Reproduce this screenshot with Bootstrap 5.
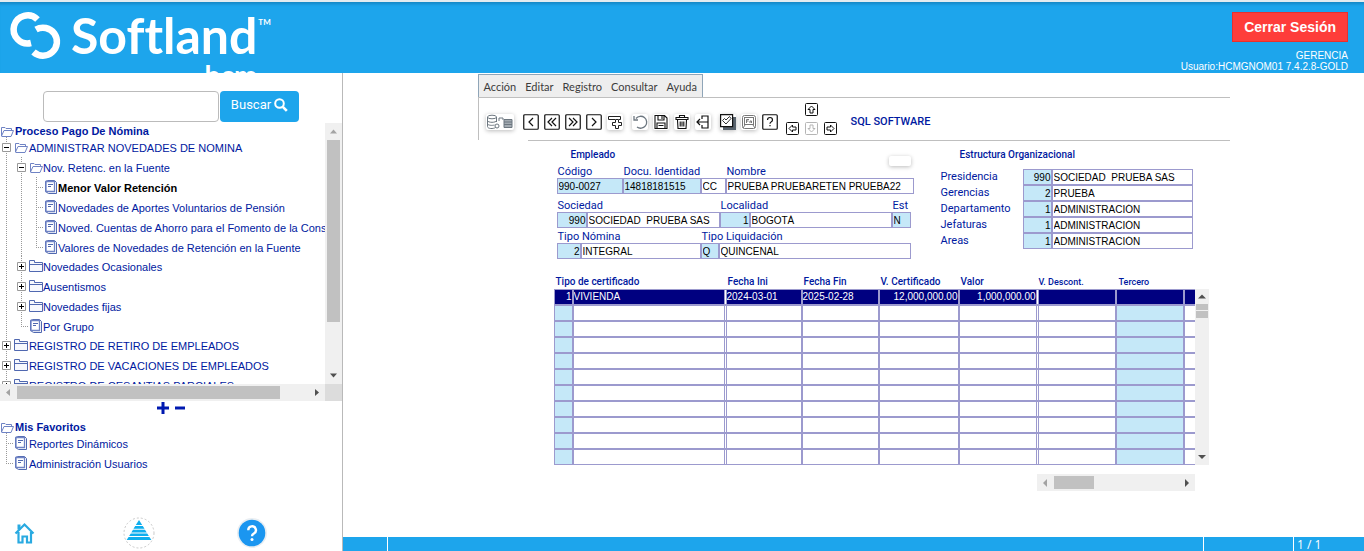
<!DOCTYPE html>
<html lang="es">
<head>
<meta charset="utf-8">
<meta name="viewport" content="width=device-width, initial-scale=1">
<title>Softland HCM</title>
<link href="https://cdn.jsdelivr.net/npm/bootstrap@5.3.0/dist/css/bootstrap.min.css" rel="stylesheet">
<style>
:root{--blue:#1da5ec;--ink:#0019a0;--line:#9c9ace;--key:#c5e8f8}
body{font:11px/16px "Liberation Sans",Arial,sans-serif;color:var(--ink);background:#fff}
a{color:inherit;text-decoration:none}
svg{display:block;flex:none}
/* header */
.topbar{height:73px;background:var(--blue);border-top:2px solid #e4ecf0;box-shadow:inset 0 4px 3px -2px #1687c4;color:#fff;padding-right:16px}
.brand{padding:4px 0 0 8px}
.brand-word{font:700 50px/58px Lato,sans-serif;font-variant-ligatures:none;padding-left:9px}
.brand-sub{font:700 28px/28px Lato,sans-serif;text-align:right;margin-top:-3px}
.brand-tm{font:700 8px/12px Lato,sans-serif;padding:10px 0 0 1px}
.logout{background:#fe3d3a;color:#fff;border:1px solid #e8302e;border-radius:0;font-size:14px;font-weight:700;line-height:16px;padding:6px 11px;margin-top:10px}
.logout:hover{background:#e8302e;color:#fff}
.session{font-size:10px;line-height:11px;margin-top:8px}
/* sidebar */
.side{width:343px;border-right:1px solid #b9b9b9;padding-top:18px}
.search{padding:0 43px}
.search .form-control{height:31px;border:1px solid #bbb;border-radius:4px;font-size:12px;padding:4px 8px}
.search .btn{width:79px;height:31px;margin-left:1px;gap:3px;background:var(--blue);color:#fff;font:13px/16px Roboto,sans-serif;border-radius:4px;border:0;padding:0 0 4px}
.treebox{height:261px;margin-top:1px}
.tree{list-style:none;margin:0;padding:0;white-space:nowrap}
.tree ul{list-style:none;margin:0;padding:0}
.tree ul ul{padding-left:15px;margin-bottom:-1px}
.tree ul li{background:repeating-linear-gradient(#999 0 1px,transparent 1px 2px) 6px 0/1px 100% no-repeat}
.tree ul li:last-child{background-size:1px 11px}
.root{height:14px;line-height:12px;padding-top:2px;font-weight:700}
.root svg{margin-right:1px}
.node{height:20px}
.node span{padding-top:2px}
.node::before{content:"";flex:none;width:8px;height:1px;margin-left:6px;background:repeating-linear-gradient(90deg,#999 0 1px,transparent 1px 2px)}
.node.exp::before{display:none}
.tog{width:14px;height:9px;border:0;padding:0 0 0 2px;background:none}
.current{color:#000;font-weight:700}
.sb{background:#f0f0f0}
.thumb{background:#c1c1c1}
.plusminus{height:14px;gap:6px}
.plusminus button{border:0;padding:0;background:none}
.fav{margin-top:4px}
.dock{padding:0 74px 2px 9px;height:34px}
/* application */
.app{width:752px;padding-top:1px}
.frame-top{border-bottom:1px solid #bfbfbf}
.menus{background:#eee;border:1px solid #8fa5b8;border-bottom:0;height:23px;padding:0 5px;gap:9px;font:11px/23px Lato,sans-serif;color:#3c3c3c}
.tools{height:42px;border-left:1px solid #bfbfbf;padding-left:7px}
.low{margin-top:5px}
.frame-low{border-top:1px solid #bfbfbf;margin-left:50px}
.tb{border:0;padding:0;background:#fff;width:16px;height:16px;border-radius:2px}
.soft{box-shadow:0 1px 4px #bbb}
.tgroup{gap:5px;margin-left:9px}
.pad{grid-template-columns:repeat(3,13px);gap:6px;margin-left:8px}
.pad .tb{width:13px;height:13px}
.pad .up{grid-column:2}
.pad .lf{grid-column:1}
.appname{font:500 11px/14px Roboto,sans-serif;margin-left:14px}
.ttl{font:500 10px/14px Roboto,sans-serif}
/* forms */
.forms{padding:0 37px 0 79px}
.emp{width:357px}
.lbl{font:11px/12px Roboto,sans-serif;white-space:nowrap;padding-left:1px}
.fld{height:16px;border:1px solid var(--line);border-radius:0;padding:0 1px;font:10px/14px "Liberation Sans",Arial,sans-serif;color:#000;background:#fff;min-width:0;width:100%;display:block}
.fld:focus{outline:1px solid var(--ink)}
.key{background:var(--key)}
.num{text-align:right;padding:0}
.g1{grid-template-columns:66px 78px 25px 1fr}
.g2{grid-template-columns:30px 133px 30px 142px 19px;padding-right:3px}
.g3{grid-template-columns:24px 120px 18px 1fr;padding-right:3px}
.org{grid-template-columns:83px 29px 141px;width:253px}
.org .lbl{line-height:16px}
/* records */
.recs{padding-left:76px;margin-top:16px}
.grid{width:641px;table-layout:fixed;border-collapse:separate;border-spacing:0;color:#000}
.grid th{font:500 10px/14px Roboto,sans-serif;color:var(--ink);padding:0 0 0 2px;white-space:nowrap}
.grid th.mini{font-size:9px;padding-left:3px}
.grid td{height:16px;border:1px solid var(--line);padding:0;line-height:14px;font-size:10px;background-clip:padding-box;white-space:nowrap;overflow:hidden}
.grid td:nth-child(1),.grid td:nth-child(8){background-color:var(--key)}
.grid td:nth-child(2),.grid td:nth-child(6){border-right:0}
.grid td:nth-child(3),.grid td:nth-child(7){border-left:3px double var(--line)}
.grid td:last-child{border-right:0}
.grid tr.on td{background-color:#000080;color:#fff}
.vbar{width:14px;height:176px;padding:4px 0}
.hbar{width:158px;height:17px;margin:9px 0 0 483px;padding:0 4px}
/* status */
.status{height:14px;background:var(--blue);color:#fff;font:12px/15px "Open Sans",sans-serif}
.status div+div{border-left:1px solid #fff}
</style>
</head>
<body>
<svg width="0" height="0" class="position-absolute" aria-hidden="true">
<defs>
<symbol id="open" viewBox="0 0 14 11"><path d="M1.5 10V1.5H5l1 1h5.500V4M1.500 10 4 4.500h9.500L11 10.500H1.500" fill="#fff" stroke="#6f83c4"/></symbol>
<symbol id="shut" viewBox="0 0 14 12"><path d="M.5 11.500V.5h5v2h8v9zM.5 4.500h13" fill="#f6f8fd" stroke="#5068b0"/></symbol>
<symbol id="doc" viewBox="0 0 14 15"><path d="M3.500.5h7l2 2v11h-8l-3-2v-10z" fill="#fff" stroke="#5068b0"/><path d="M2 1.500h8.500v10H2z" fill="#fff" stroke="#6f83c4" stroke-width="1.300"/><path d="M4 4.500h5M4 6.500h3" stroke="#5068b0"/></symbol>
<symbol id="more" viewBox="0 0 9 9"><path d="M.5.5h8v8h-8z" fill="#fff" stroke="#999"/><path d="M2 4.500h5M4.500 2v5" stroke="#000"/></symbol>
<symbol id="less" viewBox="0 0 9 9"><path d="M.5.5h8v8h-8z" fill="#fff" stroke="#999"/><path d="M2 4.500h5" stroke="#000"/></symbol>
<symbol id="arrow" viewBox="0 0 13 13"><rect x=".5" y=".5" width="12" height="12" rx="1" fill="#fff" stroke="currentColor"/><path d="M6.500 3 10 6.500H8V10H5V6.500H3z" fill="none" stroke="currentColor"/></symbol>
<symbol id="box" viewBox="0 0 16 16"><rect x=".75" y=".75" width="14.500" height="14.500" rx="1" fill="#fff" stroke="#111" stroke-width="1.200"/></symbol>
</defs>
</svg>
<div class="min-vh-100 d-flex flex-column">
<header class="topbar d-flex justify-content-between overflow-hidden">
  <div class="brand d-flex align-items-start">
    <svg width="54" height="58" viewBox="8 6 54 58" aria-hidden="true" fill="none" stroke="#fff" stroke-width="6.500"><path d="M37.500 19.500A14 14 0 1 0 31 43"/><path d="M36 29.500A14 14 0 1 1 33.500 52"/></svg>
    <div><div class="brand-word">Softland</div><div class="brand-sub">hcm</div></div>
    <div class="brand-tm">TM</div>
  </div>
  <div class="d-flex flex-column align-items-end">
    <button type="button" class="btn logout">Cerrar Sesión</button>
    <div class="session text-end">GERENCIA<br>Usuario:HCMGNOM01 7.4.2.8-GOLD</div>
  </div>
</header>
<div class="flex-grow-1 d-flex">
<aside class="side d-flex flex-column flex-shrink-0">
  <form class="search d-flex" role="search">
    <input class="form-control" type="text" aria-label="Buscar">
    <button type="button" class="btn d-flex align-items-center justify-content-center flex-shrink-0">Buscar
      <svg width="14" height="14" viewBox="0 0 14 14" aria-hidden="true" fill="none" stroke="#fff"><circle cx="5.500" cy="5.500" r="4.300" stroke-width="2"/><path d="m8.800 8.800 4 4" stroke-width="2.600"/></svg></button>
  </form>
  <div class="treebox d-flex">
    <nav class="flex-grow-1 overflow-hidden" aria-label="Procesos">
      <ul class="tree"><li>
        <a href="#" class="root d-flex align-items-center"><svg width="14" height="11"><use href="#open"/></svg>Proceso Pago De Nómina</a>
        <ul>
          <li><div class="node exp d-flex align-items-center"><button type="button" class="tog" aria-label="Contraer"><svg width="9" height="9"><use href="#less"/></svg></button><svg width="14" height="11"><use href="#open"/></svg><span><a href="#">&#8202;ADMINISTRAR NOVEDADES DE NOMINA</a></span></div>
            <ul>
              <li><div class="node exp d-flex align-items-center"><button type="button" class="tog" aria-label="Contraer"><svg width="9" height="9"><use href="#less"/></svg></button><svg width="14" height="11"><use href="#open"/></svg><span><a href="#">Nov. Retenc. en la Fuente</a></span></div>
                <ul>
                  <li><a href="#" class="node current d-flex align-items-center"><svg width="14" height="15"><use href="#doc"/></svg><span>Menor Valor Retención</span></a></li>
                  <li><a href="#" class="node d-flex align-items-center"><svg width="14" height="15"><use href="#doc"/></svg><span>Novedades de Aportes Voluntarios de Pensión</span></a></li>
                  <li><a href="#" class="node d-flex align-items-center"><svg width="14" height="15"><use href="#doc"/></svg><span>Noved. Cuentas de Ahorro para el Fomento de la Const</span></a></li>
                  <li><a href="#" class="node d-flex align-items-center"><svg width="14" height="15"><use href="#doc"/></svg><span>Valores de Novedades de Retención en la Fuente</span></a></li>
                </ul></li>
              <li><div class="node exp d-flex align-items-center"><button type="button" class="tog" aria-label="Expandir"><svg width="9" height="9"><use href="#more"/></svg></button><svg width="14" height="12"><use href="#shut"/></svg><span><a href="#">Novedades Ocasionales</a></span></div></li>
              <li><div class="node exp d-flex align-items-center"><button type="button" class="tog" aria-label="Expandir"><svg width="9" height="9"><use href="#more"/></svg></button><svg width="14" height="12"><use href="#shut"/></svg><span><a href="#">Ausentismos</a></span></div></li>
              <li><div class="node exp d-flex align-items-center"><button type="button" class="tog" aria-label="Expandir"><svg width="9" height="9"><use href="#more"/></svg></button><svg width="14" height="12"><use href="#shut"/></svg><span><a href="#">Novedades fijas</a></span></div></li>
              <li><a href="#" class="node d-flex align-items-center"><svg width="14" height="15"><use href="#doc"/></svg><span>Por Grupo</span></a></li>
            </ul></li>
          <li><div class="node exp d-flex align-items-center"><button type="button" class="tog" aria-label="Expandir"><svg width="9" height="9"><use href="#more"/></svg></button><svg width="14" height="12"><use href="#shut"/></svg><span><a href="#">&#8202;REGISTRO DE RETIRO DE EMPLEADOS</a></span></div></li>
          <li><div class="node exp d-flex align-items-center"><button type="button" class="tog" aria-label="Expandir"><svg width="9" height="9"><use href="#more"/></svg></button><svg width="14" height="12"><use href="#shut"/></svg><span><a href="#">&#8202;REGISTRO DE VACACIONES DE EMPLEADOS</a></span></div></li>
          <li><div class="node exp d-flex align-items-center"><button type="button" class="tog" aria-label="Expandir"><svg width="9" height="9"><use href="#more"/></svg></button><svg width="14" height="12"><use href="#shut"/></svg><span><a href="#">&#8202;REGISTRO DE CESANTIAS PARCIALES</a></span></div></li>
          <li><div class="node"></div></li>
        </ul></li></ul>
    </nav>
    <div class="sb d-flex flex-column align-items-center flex-shrink-0" style="width:17px">
      <svg width="17" height="17"><path d="M5 10.500h7L8.500 6.500z" fill="#a3a3a3"/></svg>
      <div class="thumb" style="width:13px;height:182px"></div>
      <svg class="mt-auto" width="17" height="17"><path d="M5 6.500h7l-3.500 4z" fill="#505050"/></svg>
    </div>
  </div>
  <div class="sb d-flex align-items-center" style="height:17px">
    <svg width="17" height="17"><path d="M10 5v7L6 8.500z" fill="#a3a3a3"/></svg>
    <div class="thumb" style="width:263px;height:13px"></div>
    <svg class="ms-auto" width="17" height="17"><path d="M7 5v7l4-3.500z" fill="#505050"/></svg>
    <div class="h-100" style="width:17px;background:#dcdcdc"></div>
  </div>
  <div class="plusminus d-flex justify-content-center align-items-center">
    <button type="button" aria-label="Expandir todo"><svg width="12" height="12"><path d="M6 0v12M0 6h12" stroke="#0019b0" stroke-width="3"/></svg></button>
    <button type="button" aria-label="Contraer todo"><svg width="10" height="12"><path d="M0 6h10" stroke="#0019b0" stroke-width="3"/></svg></button>
  </div>
  <nav class="fav" aria-label="Favoritos">
    <ul class="tree"><li>
      <a href="#" class="root d-flex align-items-center"><svg width="14" height="11"><use href="#open"/></svg>Mis Favoritos</a>
      <ul>
        <li><a href="#" class="node d-flex align-items-center"><svg width="14" height="15"><use href="#doc"/></svg><span>&#8202;Reportes Dinámicos</span></a></li>
        <li><a href="#" class="node d-flex align-items-center"><svg width="14" height="15"><use href="#doc"/></svg><span>&#8202;Administración Usuarios</span></a></li>
      </ul></li></ul>
  </nav>
  <nav class="dock mt-auto d-flex justify-content-between align-items-center" aria-label="Accesos">
    <a href="#" aria-label="Inicio"><svg width="32" height="32" fill="none" stroke="#29aae1"><path d="m6.500 16.500 9-9 9 9M9.500 15v10.500h4v-6h4.500v6h4V15" stroke-width="2.200"/><path d="M10 7.500v5" stroke-width="3"/></svg></a>
    <a href="#" aria-label="Niveles"><svg width="32" height="32"><circle cx="16" cy="16" r="15" fill="#fff" stroke="#bbb" stroke-dasharray="2 2" stroke-width=".8"/><path d="M16 3l3.200 5h-6.400zM12.200 9h7.600l1.700 2.700h-11zM10 12.700h12l1.700 2.700H8.300zM7.800 16.400h16.400l1.700 2.600H6.100zM5.600 20h20.800l2 3H3.600z" fill="#0eaeee"/></svg></a>
    <a href="#" aria-label="Ayuda"><svg width="32" height="32"><circle cx="16" cy="16" r="15" fill="#e9eef2"/><circle cx="16" cy="16" r="13.300" fill="#1b96f0"/><path d="M12.300 13.300a3.800 3.800 0 1 1 5.600 3.200q-1.900 1-1.900 2.700" fill="none" stroke="#fff" stroke-width="2.400"/><circle cx="16" cy="22.500" r="1.500" fill="#fff"/></svg></a>
  </nav>
</aside>
<main class="flex-grow-1 d-flex flex-column">
<div class="app mx-auto">
  <div class="frame-top d-flex">
    <nav class="menus d-flex" aria-label="Menú"><a href="#">Acción</a><a href="#">Editar</a><a href="#">Registro</a><a href="#">Consultar</a><a href="#">Ayuda</a></nav>
  </div>
  <div class="tools d-flex align-items-center" role="toolbar" aria-label="Herramientas">
    <button type="button" class="tb soft low" style="width:28px" aria-label="Datos"><svg width="28" height="16" fill="none" stroke="#6d7780"><ellipse cx="6" cy="3" rx="4.500" ry="1.800"/><path d="M1.500 3v9.500c0 2.500 6 2.500 8 1M10.500 3v5M1.500 6.500c0 2.400 9 2.400 9 0M1.500 9.500c0 2 5 2.200 7 1.500"/><circle cx="11" cy="12" r="2"/><path d="M13 7V4h4v2"/><path d="M18 5.500h8v8h-8zM18 8h8M18 10.500h8" fill="#a3abb2"/></svg></button>
    <div class="tgroup low d-flex">
      <button type="button" class="tb" aria-label="Anterior"><svg width="16" height="16" fill="none" stroke="#111" stroke-width="1.200"><use href="#box"/><path d="M10 4 6 8l4 4"/></svg></button>
      <button type="button" class="tb" aria-label="Primero"><svg width="16" height="16" fill="none" stroke="#111" stroke-width="1.200"><use href="#box"/><path d="M8 4 4 8l4 4M12 4 8 8l4 4"/></svg></button>
      <button type="button" class="tb" aria-label="Último"><svg width="16" height="16" fill="none" stroke="#111" stroke-width="1.200"><use href="#box"/><path d="m4 4 4 4-4 4M8 4l4 4-4 4"/></svg></button>
      <button type="button" class="tb" aria-label="Siguiente"><svg width="16" height="16" fill="none" stroke="#111" stroke-width="1.200"><use href="#box"/><path d="m6 4 4 4-4 4"/></svg></button>
      <button type="button" class="tb soft" aria-label="Insertar"><svg width="16" height="16" fill="none" stroke="#222"><path d="M8 5.500H1.500v-3h12v3H12"/><path d="M8.500 5.500h3v3h3v3h-3v3h-3v-3h-3v-3h3z"/></svg></button>
    </div>
    <div class="tgroup low d-flex">
      <button type="button" class="tb soft" aria-label="Deshacer"><svg width="16" height="16" fill="none" stroke="#6d7780" stroke-width="1.300"><path d="M4 4.500A6 6 0 1 1 5 13M2 2v4h4"/></svg></button>
      <button type="button" class="tb soft" aria-label="Guardar"><svg width="16" height="16" fill="none" stroke="#111" stroke-width="1.100"><path d="M2 1.500h9.500l2.500 2.500v10.500H2zM5 2v4h6V2M9 2v3M4 14V9h8v5M5.500 11.500h5"/></svg></button>
      <button type="button" class="tb soft" aria-label="Eliminar"><svg width="16" height="16" fill="none" stroke="#111" stroke-width="1.100"><path d="M1.500 3.500h13M5.500 3V1.500h5V3M2 3.500v2h12v-2M3.500 6l.5 8.500h8l.5-8.500M6.200 7.500v5M8 7.500v5M9.800 7.500v5"/></svg></button>
      <button type="button" class="tb soft" aria-label="Salir"><svg width="16" height="16" fill="none" stroke="#111" stroke-width="1.200"><path d="M7 5V2h6v12H7v-3M13 8H2M5 5 2 8l3 3"/></svg></button>
    </div>
    <div class="tgroup low d-flex">
      <button type="button" class="tb soft" aria-label="Aceptar"><svg width="16" height="16"><path d="M3 3h13v13H3z" fill="#59636d"/><path d="M.6.6h12v12H.6z" fill="#fff" stroke="#111" stroke-width="1.200"/><path d="m2.500 6.500 2-2L6 6l3.500-3.500 1.500 2L6 10z" fill="none" stroke="#333"/></svg></button>
      <button type="button" class="tb soft" aria-label="Función"><svg width="16" height="16" fill="none" stroke="#777"><rect x="1.500" y="1.500" width="13" height="13" rx="2"/><rect x="3.500" y="3.500" width="9" height="7"/><path d="M2 14l2-3M14 14l-2-3M5.500 9V5.500H8M5.500 7h2M9 9V7h1.500v2"/></svg></button>
      <button type="button" class="tb" aria-label="Ayuda"><svg width="16" height="16" fill="none" stroke="#111" stroke-width="1.200"><use href="#box"/><path d="M5.500 6q0-2.500 2.500-2.500T10.500 6q0 1.200-1.500 2-1 .5-1 1.800M8 11v1.300"/></svg></button>
    </div>
    <div class="pad d-grid">
      <button type="button" class="tb up" aria-label="Arriba"><svg width="13" height="13" color="#111"><use href="#arrow"/></svg></button>
      <button type="button" class="tb lf" aria-label="Izquierda"><svg width="13" height="13" color="#111"><use href="#arrow" transform="rotate(-90 6.500 6.500)"/></svg></button>
      <button type="button" class="tb" aria-label="Abajo" disabled><svg width="13" height="13" color="#b5b5b5"><use href="#arrow" transform="rotate(180 6.500 6.500)"/></svg></button>
      <button type="button" class="tb" aria-label="Derecha"><svg width="13" height="13" color="#111"><use href="#arrow" transform="rotate(90 6.500 6.500)"/></svg></button>
    </div>
    <div class="appname low">SQL SOFTWARE</div>
  </div>
  <div class="frame-low"></div>
  <form class="forms d-flex justify-content-between">
    <div class="emp">
      <div class="d-flex justify-content-between" style="padding:7px 3px 0 14px"><div class="ttl">Empleado</div><button type="button" class="tb soft mt-2" style="width:22px;height:10px" aria-label="Foto"></button></div>
      <div class="g1 d-grid">
        <label class="lbl" for="cod">Código</label><label class="lbl" for="doc1">Docu. Identidad</label><span></span><label class="lbl" for="nom">Nombre</label>
        <input id="cod" class="fld key" value="990-0027"><input id="doc1" class="fld key" value="14818181515"><input class="fld" aria-label="Tipo de documento" value="CC"><input id="nom" class="fld" value="PRUEBA PRUEBARETEN PRUEBA22">
      </div>
      <div class="g2 d-grid" style="margin-top:6px">
        <label class="lbl" for="soc">Sociedad</label><span></span><label class="lbl" for="loc">Localidad</label><span></span><label class="lbl" for="est">Est</label>
        <input id="soc" class="fld key num" value="990"><input class="fld" aria-label="Nombre de la sociedad" value="SOCIEDAD  PRUEBA SAS"><input id="loc" class="fld key num" value="1"><input class="fld" aria-label="Nombre de la localidad" value="BOGOTÁ"><input id="est" class="fld key" value="N">
      </div>
      <div class="g3 d-grid" style="margin-top:3px">
        <label class="lbl" for="tn">Tipo Nómina</label><span></span><label class="lbl" for="tl">Tipo Liquidación</label><span></span>
        <input id="tn" class="fld key num" value="2"><input class="fld" aria-label="Nombre del tipo de nómina" value="INTEGRAL"><input id="tl" class="fld key" value="Q"><input class="fld" aria-label="Nombre del tipo de liquidación" value="QUINCENAL">
      </div>
    </div>
    <div>
      <div class="ttl" style="padding:7px 0 7px 20px">Estructura Organizacional</div>
      <div class="org d-grid">
        <label class="lbl" for="o1">Presidencia</label><input id="o1" class="fld key num" value="990"><input class="fld" aria-label="Nombre de la presidencia" value="SOCIEDAD  PRUEBA SAS">
        <label class="lbl" for="o2">Gerencias</label><input id="o2" class="fld key num" value="2"><input class="fld" aria-label="Nombre de la gerencia" value="PRUEBA">
        <label class="lbl" for="o3">Departamento</label><input id="o3" class="fld key num" value="1"><input class="fld" aria-label="Nombre del departamento" value="ADMINISTRACIÓN">
        <label class="lbl" for="o4">Jefaturas</label><input id="o4" class="fld key num" value="1"><input class="fld" aria-label="Nombre de la jefatura" value="ADMINISTRACIÓN">
        <label class="lbl" for="o5">Areas</label><input id="o5" class="fld key num" value="1"><input class="fld" aria-label="Nombre del área" value="ADMINISTRACIÓN">
      </div>
    </div>
  </form>
  <div class="recs">
    <div class="d-flex align-items-end">
      <table class="grid">
        <colgroup><col style="width:19px"><col style="width:151px"><col style="width:78px"><col style="width:77px"><col style="width:80px"><col style="width:77px"><col style="width:80px"><col style="width:68px"><col></colgroup>
        <thead><tr><th colspan="2">Tipo de certificado</th><th class="ps-1">Fecha Ini</th><th>Fecha Fin</th><th>V. Certificado</th><th>Valor</th><th class="mini">V. Descont.</th><th class="mini">Tercero</th><th></th></tr></thead>
        <tbody>
          <tr class="on"><td class="text-end">1</td><td>VIVIENDA</td><td>2024-03-01</td><td>2025-02-28</td><td class="text-end">12,000,000.00</td><td class="text-end">1,000,000.00</td><td></td><td></td><td></td></tr>
          <tr><td></td><td></td><td></td><td></td><td></td><td></td><td></td><td></td><td></td></tr>
          <tr><td></td><td></td><td></td><td></td><td></td><td></td><td></td><td></td><td></td></tr>
          <tr><td></td><td></td><td></td><td></td><td></td><td></td><td></td><td></td><td></td></tr>
          <tr><td></td><td></td><td></td><td></td><td></td><td></td><td></td><td></td><td></td></tr>
          <tr><td></td><td></td><td></td><td></td><td></td><td></td><td></td><td></td><td></td></tr>
          <tr><td></td><td></td><td></td><td></td><td></td><td></td><td></td><td></td><td></td></tr>
          <tr><td></td><td></td><td></td><td></td><td></td><td></td><td></td><td></td><td></td></tr>
          <tr><td></td><td></td><td></td><td></td><td></td><td></td><td></td><td></td><td></td></tr>
          <tr><td></td><td></td><td></td><td></td><td></td><td></td><td></td><td></td><td></td></tr>
          <tr><td></td><td></td><td></td><td></td><td></td><td></td><td></td><td></td><td></td></tr>
        </tbody>
      </table>
      <div class="vbar sb d-flex flex-column align-items-center">
        <svg width="8" height="8"><path d="M0 5.500h8L4 1.500z" fill="#505050"/></svg>
        <div class="thumb" style="width:12px;height:6px;margin-top:3px"></div>
        <div class="thumb" style="width:12px;height:7px;margin-top:1px"></div>
        <svg class="mt-auto" width="8" height="8"><path d="M0 2h8L4 6z" fill="#505050"/></svg>
      </div>
    </div>
    <div class="hbar sb d-flex align-items-center">
      <svg width="8" height="8"><path d="M6 0v8L2 4z" fill="#a3a3a3"/></svg>
      <div class="thumb" style="width:40px;height:13px;margin-left:5px"></div>
      <svg class="ms-auto" width="8" height="8"><path d="M2 0v8l4-4z" fill="#505050"/></svg>
    </div>
  </div>
</div>
<footer class="status mt-auto d-flex"><div style="width:44px"></div><div class="flex-grow-1"></div><div style="width:90px"></div><div style="width:71px;padding-left:3px">1 / 1</div></footer>
</main>
</div>
</div>
<script src="https://cdn.jsdelivr.net/npm/bootstrap@5.3.0/dist/js/bootstrap.bundle.min.js"></script>
</body>
</html>
